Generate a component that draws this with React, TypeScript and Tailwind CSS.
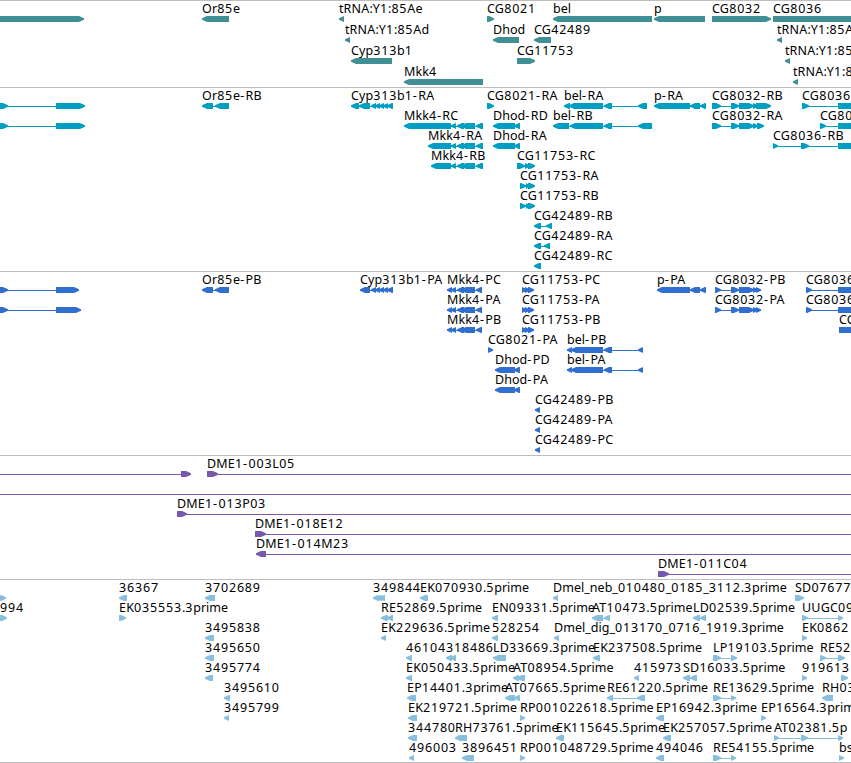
type Dir = "L" | "R";
type Span = [number, number];

interface Feature {
  row: number;
  label?: string;
  dir: Dir;
  spans: Span[];
}

interface TrackData {
  name: string;
  height: string;
  color: string;
  pitch: number;
  features: Feature[];
}

const f = (row: number, label: string, dir: Dir, ...spans: Span[]): Feature => ({ row, label, dir, spans });

const mkk4Exons: Span[] = [[451, 456], [457, 464], [461, 475], [476, 483]];
const mkk4Cds: Span[] = [[447, 452], [451, 456], [457, 464], [461, 475], [476, 482]];
const cypExons: Span[] = [[371, 376], [375, 380], [379, 384], [383, 388], [387, 393]];
const belCds: Span[] = [[567, 572], [571, 603], [604, 612], [638, 643]];
const cg11753Cds: Span[] = [[522, 527], [525, 530], [528, 534]];
const cg8032Cds: Span[] = [[715, 721], [731, 739], [739, 754], [753, 758], [756, 761]];

const tracks: TrackData[] = [
  {
    name: "Genes",
    height: "h-[87px]",
    color: "text-[#408f94]",
    pitch: 21,
    features: [
      f(0, "", "R", [-9, 84]),
      f(0, "Or85e", "L", [202, 229]),
      f(0, "tRNA:Y1:85Ae", "L", [339, 344]),
      f(0, "CG8021", "R", [487, 494]),
      f(0, "bel", "L", [553, 652]),
      f(0, "p", "L", [654, 705]),
      f(0, "CG8032", "R", [712, 771]),
      f(0, "CG8036", "R", [773, 870]),
      f(1, "tRNA:Y1:85Ad", "L", [345, 350]),
      f(1, "Dhod", "L", [493, 519]),
      f(1, "CG42489", "L", [534, 551]),
      f(1, "tRNA:Y1:85A", "L", [777, 782]),
      f(2, "Cyp313b1", "L", [351, 392]),
      f(2, "CG11753", "R", [517, 535]),
      f(2, "tRNA:Y1:85", "L", [785, 790]),
      f(3, "Mkk4", "L", [404, 483]),
      f(3, "tRNA:Y1:8", "L", [793, 798]),
    ],
  },
  {
    name: "Transcripts",
    height: "h-[184px]",
    color: "text-[#009fc1]",
    pitch: 20,
    features: [
      f(0, "", "R", [-9, 8], [56, 85]),
      f(0, "Or85e-RB", "L", [202, 213], [215, 229]),
      f(0, "Cyp313b1-RA", "L", [351, 359], [359, 370], ...cypExons),
      f(0, "CG8021-RA", "R", [487, 494]),
      f(0, "bel-RA", "L", [564, 570], [569, 603], [604, 612], [638, 647]),
      f(0, "p-RA", "L", [654, 690], [690, 700], [700, 706]),
      f(0, "CG8032-RB", "R", [712, 721], [731, 739], [739, 754], [753, 758], [756, 771]),
      f(0, "CG8036", "R", [802, 809], [838, 870]),
      f(1, "", "R", [-9, 8], [56, 85]),
      f(1, "Mkk4-RC", "L", [404, 451], ...mkk4Exons),
      f(1, "Dhod-RD", "L", [493, 515], [514, 520]),
      f(1, "bel-RB", "L", [553, 569], [570, 603], [604, 612], [638, 652]),
      f(1, "CG8032-RA", "R", [712, 721], [731, 739], [739, 754], [753, 758], [757, 764]),
      f(1, "CG80", "R", [820, 826], [838, 870]),
      f(2, "Mkk4-RA", "L", [428, 451], ...mkk4Exons),
      f(2, "Dhod-RA", "L", [493, 515], [514, 520]),
      f(2, "CG8036-RB", "R", [773, 778], [801, 809], [838, 870]),
      f(3, "Mkk4-RB", "L", [431, 451], ...mkk4Exons),
      f(3, "CG11753-RC", "R", [517, 525], [525, 530], [528, 535]),
      f(4, "CG11753-RA", "R", [520, 526], [526, 530], [528, 535]),
      f(5, "CG11753-RB", "R", [520, 526], [526, 530], [528, 535]),
      f(6, "CG42489-RB", "L", [534, 541], [546, 552]),
      f(7, "CG42489-RA", "L", [534, 541], [544, 550]),
      f(8, "CG42489-RC", "L", [534, 541]),
    ],
  },
  {
    name: "CDS",
    height: "h-[184px]",
    color: "text-[#306fce]",
    pitch: 20,
    features: [
      f(0, "", "R", [-9, 8], [56, 79]),
      f(0, "Or85e-PB", "L", [202, 213], [215, 229]),
      f(0, "Cyp313b1-PA", "L", [360, 370], ...cypExons),
      f(0, "Mkk4-PC", "L", ...mkk4Cds),
      f(0, "CG11753-PC", "R", ...cg11753Cds),
      f(0, "p-PA", "L", [657, 690], [690, 700], [700, 706]),
      f(0, "CG8032-PB", "R", ...cg8032Cds),
      f(0, "CG8036", "R", [806, 812], [838, 870]),
      f(1, "", "R", [-9, 8], [56, 81]),
      f(1, "Mkk4-PA", "L", ...mkk4Cds),
      f(1, "CG11753-PA", "R", ...cg11753Cds),
      f(1, "CG8032-PA", "R", ...cg8032Cds),
      f(1, "CG8036", "R", [806, 812], [838, 870]),
      f(2, "Mkk4-PB", "L", ...mkk4Cds),
      f(2, "CG11753-PB", "R", ...cg11753Cds),
      f(2, "CG", "R", [839, 870]),
      f(3, "CG8021-PA", "R", [488, 493]),
      f(3, "bel-PB", "L", ...belCds),
      f(4, "Dhod-PD", "L", [495, 515], [514, 520]),
      f(4, "bel-PA", "L", ...belCds),
      f(5, "Dhod-PA", "L", [495, 515], [514, 520]),
      f(6, "CG42489-PB", "L", [535, 540]),
      f(7, "CG42489-PA", "L", [535, 540]),
      f(8, "CG42489-PC", "L", [535, 540]),
    ],
  },
  {
    name: "BACs",
    height: "h-[124px]",
    color: "text-[#7858aa]",
    pitch: 20,
    features: [
      f(0, "", "R", [-20, -9], [181, 191]),
      f(0, "DME1-003L05", "R", [207, 218], [870, 880]),
      f(1, "", "R", [-20, -9], [870, 880]),
      f(2, "DME1-013P03", "R", [177, 187], [870, 880]),
      f(3, "DME1-018E12", "R", [255, 266], [870, 880]),
      f(4, "DME1-014M23", "L", [256, 266], [870, 880]),
      f(5, "DME1-011C04", "R", [658, 669], [870, 880]),
    ],
  },
  {
    name: "ESTs",
    height: "h-[183px]",
    color: "text-[#88bfdf]",
    pitch: 20,
    features: [
      f(0, "", "R", [-9, 6]),
      f(0, "36367", "L", [119, 127]),
      f(0, "3702689", "L", [205, 215]),
      f(0, "349844", "L", [373, 379], [376, 382], [379, 385]),
      f(0, "EK070930.5prime", "L", [420, 428]),
      f(0, "Dmel_neb_010480_0185_3112.3prime", "L", [553, 558]),
      f(0, "SD07677", "R", [795, 804]),
      f(1, "994", "R", [0, 7]),
      f(1, "EK035553.3prime", "R", [119, 126]),
      f(1, "RE52869.5prime", "L", [381, 388], [387, 393]),
      f(1, "EN09331.5prime", "L", [492, 498]),
      f(1, "AT10473.5prime", "L", [592, 603], [604, 610]),
      f(1, "LD02539.5prime", "L", [693, 700], [700, 706]),
      f(1, "UUGC09", "R", [802, 808], [838, 843]),
      f(2, "3495838", "L", [205, 214]),
      f(2, "EK229636.5prime", "L", [381, 386]),
      f(2, "528254", "L", [492, 498]),
      f(2, "Dmel_dig_013170_0716_1919.3prime", "L", [554, 559]),
      f(2, "EK0862", "R", [802, 807]),
      f(3, "3495650", "L", [205, 214]),
      f(3, "46104", "L", [406, 412]),
      f(3, "318486", "L", [446, 452], [450, 456]),
      f(3, "LD33669.3prime", "L", [493, 506]),
      f(3, "EK237508.5prime", "L", [593, 600]),
      f(3, "LP19103.5prime", "R", [713, 721], [731, 737]),
      f(3, "RE52", "R", [820, 826], [838, 845]),
      f(4, "3495774", "L", [205, 213]),
      f(4, "EK050433.5prime", "L", [406, 412]),
      f(4, "AT08954.5prime", "L", [513, 519], [517, 525]),
      f(4, "415973", "L", [634, 639]),
      f(4, "SD16033.5prime", "L", [683, 690], [690, 697]),
      f(4, "919613", "R", [802, 807]),
      f(4, "", "R", [841, 848]),
      f(5, "3495610", "L", [224, 230]),
      f(5, "EP14401.3prime", "L", [407, 416]),
      f(5, "AT07665.5prime", "L", [505, 515], [514, 520]),
      f(5, "RE61220.5prime", "L", [607, 613], [637, 645]),
      f(5, "RE13629.5prime", "R", [713, 721], [731, 736]),
      f(5, "RH03", "L", [822, 833]),
      f(6, "3495799", "L", [224, 229]),
      f(6, "EK219721.5prime", "L", [408, 417]),
      f(6, "RP001022618.5prime", "R", [520, 525]),
      f(6, "EP16942.3prime", "L", [656, 664]),
      f(6, "EP16564.3prim", "R", [761, 766]),
      f(7, "344780", "L", [408, 417]),
      f(7, "RH73761.5prime", "L", [455, 467]),
      f(7, "EK115645.5prime", "L", [556, 564]),
      f(7, "EK257057.5prime", "L", [663, 671]),
      f(7, "AT02381.5p", "R", [774, 779], [801, 808], [838, 843]),
      f(8, "496003", "L", [409, 414]),
      f(8, "3896451", "L", [462, 474]),
      f(8, "RP001048729.5prime", "R", [520, 525]),
      f(8, "494046", "L", [656, 664]),
      f(8, "RE54155.5prime", "R", [713, 721], [731, 736]),
      f(8, "bs", "R", [839, 844]),
    ],
  },
];

// Block with a slightly blunt pointed end on the strand side
function exonPath([a, b]: Span, dir: Dir, y: number) {
  const tip = Math.min(5, b - a);
  if (dir === "L") return `M${a} ${y + 2.3}L${a + tip} ${y}H${b}V${y + 6}H${a + tip}L${a} ${y + 3.7}Z`;
  return `M${b} ${y + 2.3}L${b - tip} ${y}H${a}V${y + 6}H${b - tip}L${b} ${y + 3.7}Z`;
}

// Digits sit on a wider pitch than the letters around them
function Label({ text }: { text: string }) {
  const runs = text.match(/\d+|[-:._]|[A-Z]+|[a-z]+/g) ?? [];
  return (
    <>
      {runs.map((run, i) => {
        if (/^\d/.test(run)) return <span key={i} className="tracking-[0.82px]">{run}</span>;
        if (run === "-") return <span key={i} className="tracking-[1.4px]">{run}</span>;
        if (/^[A-Z]/.test(run)) return <span key={i} className="tracking-[0.2px]">{run}</span>;
        return <span key={i}>{run}</span>;
      })}
    </>
  );
}

function Track({ track }: { track: TrackData }) {
  return (
    <section aria-label={track.name} className={`relative w-full overflow-hidden border-t border-[#bebebe] ${track.height}`}>
      <svg className={`block h-full w-full ${track.color}`} fill="currentColor">
        {track.features.map((item, i) => {
          const y = 15 + item.row * track.pitch;
          const start = item.spans[0][0];
          const end = item.spans[item.spans.length - 1][1];
          return (
            <g key={i}>
              {item.spans.length > 1 && <rect x={start + 1} y={y + 3} width={end - start - 2} height={1} />}
              {item.spans.map((span, j) => (
                <path key={j} d={exonPath(span, item.dir, y)} />
              ))}
            </g>
          );
        })}
      </svg>
      {track.features.map((item, i) =>
        item.label ? (
          <span
            key={i}
            className="absolute text-[12.5px] leading-4 whitespace-nowrap text-black"
            style={{ left: item.spans[0][0], top: item.row * track.pitch }}
          >
            <Label text={item.label} />
          </span>
        ) : null
      )}
    </section>
  );
}

export default function App() {
  return (
    <main className="flex h-[763px] w-[851px] flex-col overflow-hidden border-b border-[#bebebe] bg-white font-['Noto_Sans',sans-serif]">
      {tracks.map((track) => (
        <Track key={track.name} track={track} />
      ))}
    </main>
  );
}
